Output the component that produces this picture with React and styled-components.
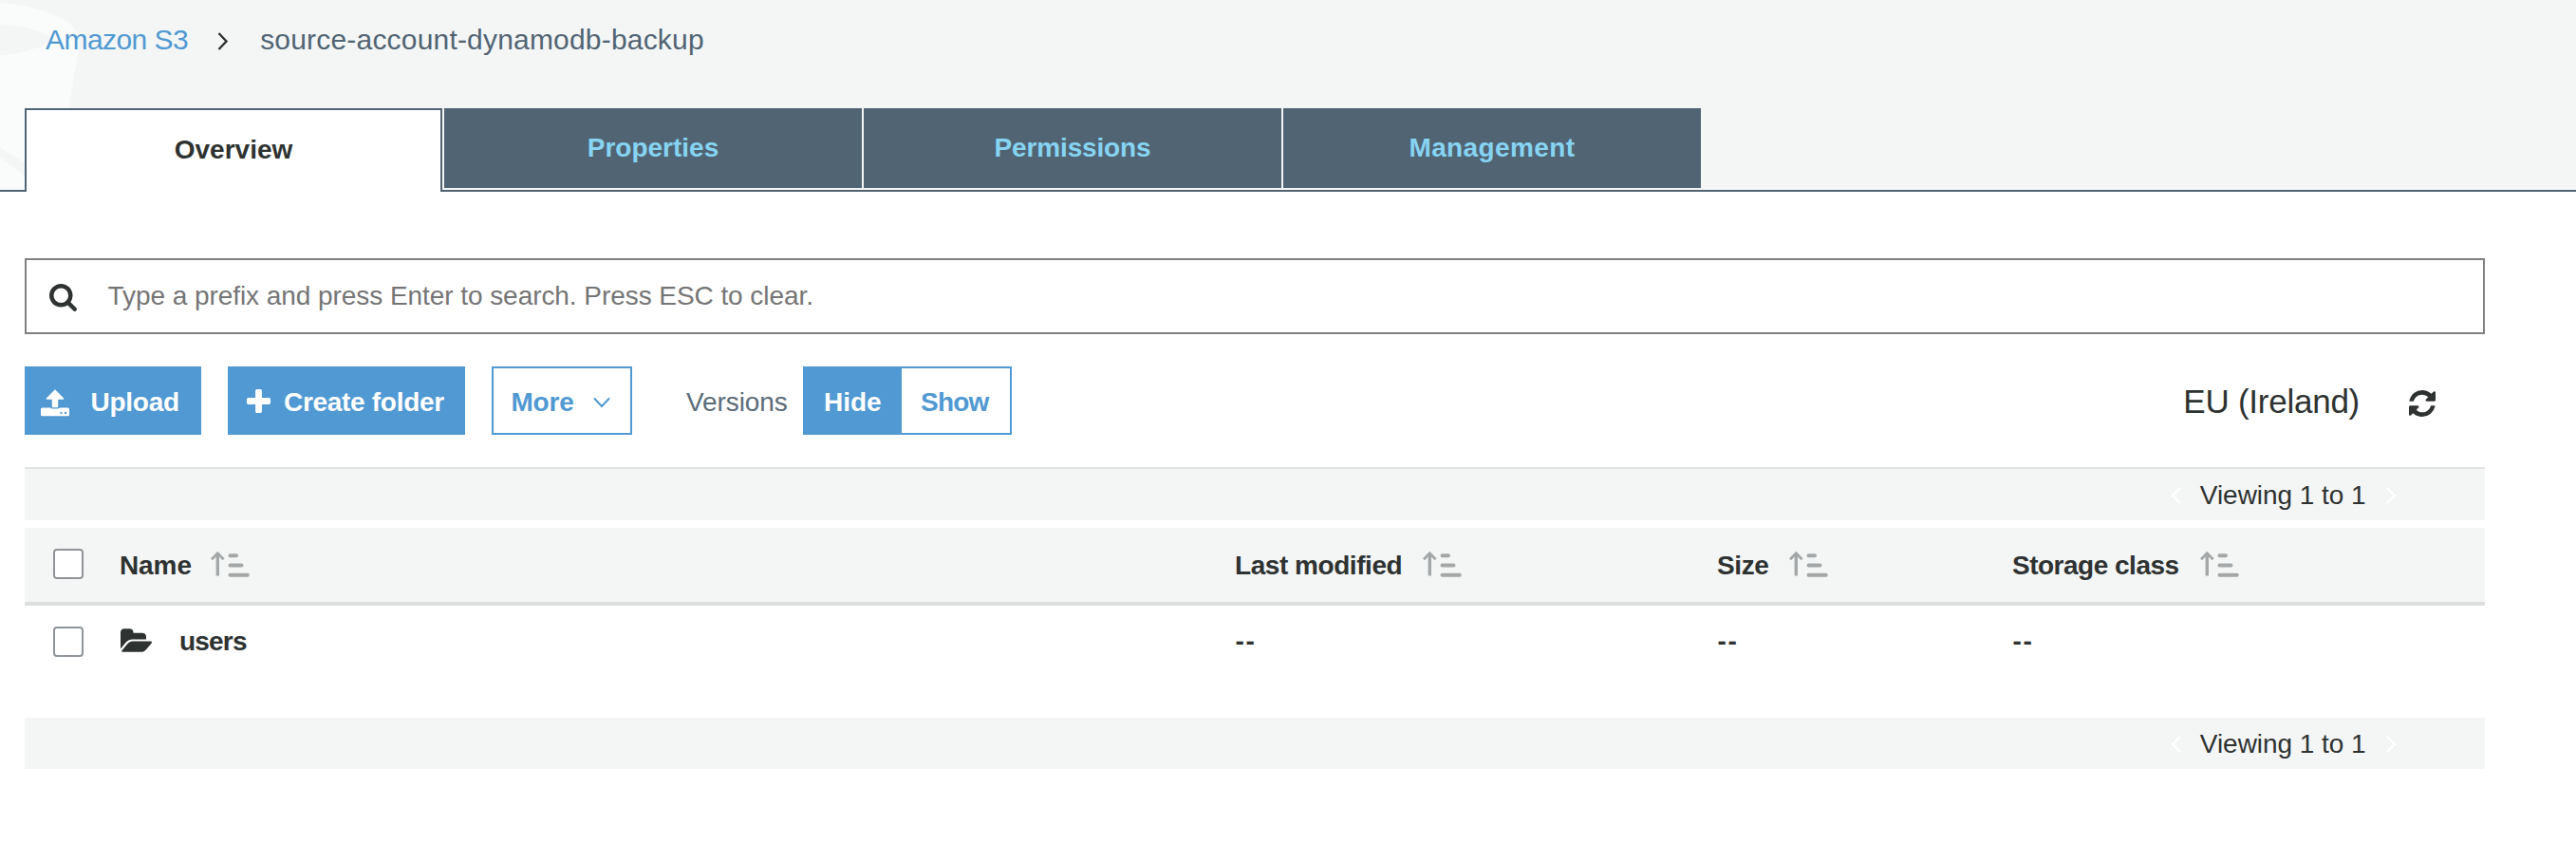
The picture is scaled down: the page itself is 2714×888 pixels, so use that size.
import React from "react";
import styled, { createGlobalStyle, css } from "styled-components";

const color = {
  ink: "#2e3231",
  slate: "#516473",
  blue: "#5099d2",
  sky: "#86d4f2",
  panel: "#f4f6f6",
  muted: "#a3a7a7",
};

const GlobalStyle = createGlobalStyle`
  * { box-sizing: border-box; }
  body {
    margin: 0;
    background: #fff;
    color: ${color.ink};
    font: 28px "Liberation Sans", Arial, sans-serif;
  }
`;

const Page = styled.div`
  min-height: 888px;
  width: 100%;
`;

/* Header */

const Header = styled.header`
  position: relative;
  height: 202px;
  display: flex;
  flex-direction: column;
  justify-content: space-between;
  background: linear-gradient(${color.panel}, ${color.panel}) top / 100% 200px no-repeat;
`;

const BucketArt = styled.svg`
  position: absolute;
  top: 0;
  left: 0;
`;

const Breadcrumb = styled.nav`
  position: relative;
  display: flex;
  align-items: center;
  height: 84px;
  padding-left: 48px;
  font-size: 30px;
`;

const CrumbLink = styled.a`
  color: ${color.blue};
  letter-spacing: -0.55px;
`;

const Crumb = styled.span`
  color: ${color.slate};
  letter-spacing: 0.19px;
`;

const CrumbChevron = styled.svg`
  margin: 3px 33px 0 31px;
`;

const TabStrip = styled.div`
  position: relative;
  display: flex;
  height: 88px;
`;

const TabLead = styled.div`
  width: 26px;
  border-bottom: 2px solid ${color.slate};
`;

const TabRest = styled.div`
  flex: 1;
  display: flex;
  align-items: flex-start;
  gap: 2px;
  padding-left: 2px;
  border-bottom: 2px solid ${color.slate};
`;

const Tab = styled.button`
  display: flex;
  align-items: center;
  justify-content: center;
  width: 440px;
  height: 84px;
  padding: 0;
  border: 0;
  background: ${color.slate};
  color: ${color.sky};
  font: inherit;
  font-weight: bold;
  letter-spacing: ${(p) => p.$spacing || 0}px;
  ${(p) =>
    p.$active &&
    css`
      height: 88px;
      border: 2px solid ${color.slate};
      border-bottom: 0;
      padding-bottom: 2px;
      background: #fff;
      color: ${color.ink};
    `}
`;

/* Search and actions */

const Content = styled.main`
  width: 2592px;
  margin: 70px 0 0 26px;
`;

const SearchBox = styled.div`
  display: flex;
  align-items: center;
  gap: 32.5px;
  height: 80px;
  padding-left: 24px;
  border: 2px solid #808080;
  color: #757575;
  letter-spacing: -0.06px;

  svg {
    margin-top: 2px;
  }
`;

const Toolbar = styled.div`
  display: flex;
  align-items: center;
  height: 72px;
  margin-top: 34px;
`;

const Button = styled.button`
  display: flex;
  align-items: center;
  width: ${(p) => p.$width}px;
  height: 72px;
  margin-right: ${(p) => p.$after || 0}px;
  padding: 4px 0 0 ${(p) => p.$pad - 2}px;
  gap: ${(p) => p.$gap || 0}px;
  border: 2px solid ${color.blue};
  background: ${(p) => (p.$primary ? color.blue : "#fff")};
  color: ${(p) => (p.$primary ? "#fff" : color.blue)};
  font: inherit;
  font-weight: bold;
  letter-spacing: ${(p) => p.$spacing || 0}px;
  white-space: nowrap;

  svg {
    flex: none;
    margin-bottom: ${(p) => p.$lift || 0}px;
  }
`;

const VersionsLabel = styled.span`
  width: 123px;
  padding-top: 4px;
  color: #5a6c79;
  letter-spacing: -0.1px;
`;

const Region = styled.div`
  display: flex;
  align-items: center;
  gap: 52px;
  margin-left: auto;
  padding: 2px 52px 0 0;
  font-size: 35px;
  letter-spacing: -0.25px;

  svg {
    margin-top: 4px;
  }
`;

/* Listing */

const Pager = styled.div`
  display: flex;
  align-items: center;
  justify-content: flex-end;
  height: ${(p) => (p.$ruled ? 56 : 54)}px;
  margin-top: ${(p) => p.$before}px;
  padding: 2px 93px 0 0;
  border-top: ${(p) => (p.$ruled ? "2px solid #e2e3e3" : "0")};
  background: ${color.panel};
  letter-spacing: -0.05px;
`;

const PagerText = styled.span`
  margin: 0 21.5px 0 19.5px;
`;

const Row = styled.div`
  display: grid;
  grid-template-columns: 100px 1175px 508px 311px 1fr;
  align-items: center;
  height: 76px;
  font-weight: bold;
`;

const HeadRow = styled(Row)`
  height: 82px;
  margin-top: 8px;
  border-bottom: 4px solid #dcdddd;
  background: ${color.panel};
`;

const Checkbox = styled.span`
  width: 32px;
  height: 32px;
  margin: 0 0 ${(p) => p.$lift || 0}px 30px;
  border: 2px solid #8f9498;
  border-radius: 4px;
  background: #fff;
`;

const ColumnTitle = styled.div`
  display: flex;
  align-items: center;
  gap: ${(p) => p.$gap || 22}px;
  padding-top: 2px;
  letter-spacing: ${(p) => p.$spacing}px;

  svg {
    margin-bottom: 4px;
  }
`;

const Entry = styled.div`
  display: flex;
  align-items: center;
  gap: 29px;
  padding-left: 1px;
  letter-spacing: -0.8px;

  svg {
    margin-bottom: 3px;
  }
`;

const Empty = styled.span`
  padding-left: 0.5px;
  letter-spacing: 1.6px;
`;

/* Icons */

const SearchIcon = () => (
  <svg width="29" height="29" viewBox="64 128 1664 1664" fill={color.ink}>
    <path d="M1216 832q0-185-131.5-316.5t-316.5-131.5-316.5 131.5-131.5 316.5 131.5 316.5 316.5 131.5 316.5-131.5 131.5-316.5zm512 832q0 52-38 90t-90 38q-54 0-90-38l-343-342q-179 124-399 124-143 0-273.5-55.5t-225-150-150-225-55.5-273.5 55.5-273.5 150-225 225-150 273.5-55.5 273.5 55.5 225 150 150 225 55.5 273.5q0 220-124 399l343 343q37 37 37 90z" />
  </svg>
);

const UploadIcon = () => (
  <svg width="30" height="29" viewBox="0 0 30 29" fill="#fff">
    <path d="M15 .3 24.200 9.600Q24.800 10.600 23.600 10.800H18.200V18.300Q18.200 19.200 17.300 19.200H12.700Q11.800 19.200 11.800 18.300V10.800H6.400Q5.200 10.600 5.800 9.600Z" />
    <path
      fillRule="evenodd"
      d="M1.500 19.400H10.200Q10.800 20.500 12.200 20.500H17.800Q19.200 20.500 19.800 19.400H28.500Q30 19.400 30 20.900V26.700Q30 28.200 28.500 28.200H1.500Q0 28.200 0 26.700V20.900Q0 19.400 1.500 19.400ZM20.500 24V26H22.500V24ZM25 24V26H27V24Z"
    />
  </svg>
);

const PlusIcon = () => (
  <svg width="25" height="25" viewBox="192 128 1408 1408" fill="#fff">
    <path d="M1600 736v192q0 40-28 68t-68 28h-416v416q0 40-28 68t-68 28h-192q-40 0-68-28t-28-68v-416h-416q-40 0-68-28t-28-68v-192q0-40 28-68t68-28h416v-416q0-40 28-68t68-28h192q40 0 68 28t28 68v416h416q40 0 68 28t28 68z" />
  </svg>
);

const RefreshIcon = () => (
  <svg width="28" height="28" viewBox="128 128 1536 1536" fill={color.ink}>
    <path d="M1639 1056q0 5-1 7-64 268-268 434.5t-478 166.5q-146 0-282.5-55t-243.5-157l-129 129q-19 19-45 19t-45-19-19-45v-448q0-26 19-45t45-19h448q26 0 45 19t19 45-19 45l-137 137q71 66 161 102t187 36q134 0 250-65t186-179q11-17 53-117 8-23 30-23h192q13 0 22.5 9.5t9.5 22.5zm25-800v448q0 26-19 45t-45 19h-448q-26 0-45-19t-19-45 19-45l138-138q-148-137-349-137-134 0-250 65t-186 179q-11 17-53 117-8 23-30 23h-199q-13 0-22.5-9.5t-9.5-22.5v-7q65-268 270-434.5t480-166.5q146 0 284 55.5t245 156.5l130-129q19-19 45-19t45 19 19 45z" />
  </svg>
);

const FolderIcon = () => (
  <svg width="33" height="25" viewBox="0 128 1879 1408" fill={color.ink}>
    <path d="M1879 952q0 31-31 66l-336 396q-43 51-120.5 86.5t-143.5 35.5h-1088q-34 0-60.5-13t-26.5-43q0-31 31-66l336-396q43-51 120.5-86.5t143.5-35.5h1088q34 0 60.5 13t26.5 43zm-343-344v160h-832q-94 0-197 47.5t-164 119.5l-337 396-5 6q0-4-.5-12.5t-.5-12.5v-960q0-92 66-158t158-66h320q92 0 158 66t66 158v32h544q92 0 158 66t66 158z" />
  </svg>
);

const DownIcon = () => (
  <svg width="18" height="12" viewBox="0 0 18 12" fill="none" stroke={color.blue} strokeWidth="2" strokeLinecap="round">
    <path d="M1.5 2 9 10 16.5 2" />
  </svg>
);

const PagerArrow = ({ d }) => (
  <svg width="11" height="18" viewBox="0 0 11 18" fill="none" stroke="#fff" strokeWidth="2.2">
    <path d={d} />
  </svg>
);

const SortIcon = () => (
  <svg width="42" height="28" viewBox="0 0 42 28" fill="none" stroke={color.muted} strokeLinecap="round">
    <path strokeWidth="3.4" strokeLinecap="butt" d="M7.3 26.5V3.5" />
    <path strokeWidth="2.8" strokeLinecap="butt" d="M1 9.2 7.3 2.8 13.6 9.2" />
    <path strokeWidth="4" d="M20.5 5.2H27M20.5 15.6H32.5M20.5 25.8H38.8" />
  </svg>
);

const tabs = [
  { label: "Properties" },
  { label: "Permissions", spacing: -0.15 },
  { label: "Management", spacing: 0.4 },
];

const columns = [
  { label: "Name", spacing: -0.1, gap: 20.5 },
  { label: "Last modified", spacing: -0.45 },
  { label: "Size", spacing: -0.4 },
  { label: "Storage class", spacing: -0.5 },
];

const Paging = (props) => (
  <Pager {...props}>
    <PagerArrow d="M10 1 2 9l8 8" />
    <PagerText>Viewing 1 to 1</PagerText>
    <PagerArrow d="M1 1l8 8-8 8" />
  </Pager>
);

export default function App() {
  return (
    <Page>
      <GlobalStyle />
      <Header>
        <BucketArt width="90" height="200" viewBox="0 0 90 200">
          <path fill="#fafcfb" d="M0 3C26 5 44 10 58 16 74 23 83 31 82.500 42L82 57 72 114 58 200H0Z" />
          <path fill={color.panel} d="M0 26C20 27 52 33 52 40.500 52 49 22 57 0 58Z" />
          <path fill={color.panel} d="M0 155 40 181V196L0 166Z" />
        </BucketArt>
        <Breadcrumb>
          <CrumbLink>Amazon S3</CrumbLink>
          <CrumbChevron width="12" height="19" viewBox="0 0 12 19" fill="none" stroke={color.ink} strokeWidth="2.4">
            <path d="M1.500 1 9.500 9.500 1.500 18" />
          </CrumbChevron>
          <Crumb>source-account-dynamodb-backup</Crumb>
        </Breadcrumb>
        <TabStrip>
          <TabLead />
          <Tab $active>Overview</Tab>
          <TabRest>
            {tabs.map((t) => (
              <Tab key={t.label} $spacing={t.spacing}>{t.label}</Tab>
            ))}
          </TabRest>
        </TabStrip>
      </Header>
      <Content>
        <SearchBox>
          <SearchIcon />
          <span>Type a prefix and press Enter to search. Press ESC to clear.</span>
        </SearchBox>
        <Toolbar>
          <Button $primary $width={186} $pad={17} $gap={22.5} $after={28} $spacing={-0.25}>
            <UploadIcon />
            Upload
          </Button>
          <Button $primary $width={250} $pad={20} $gap={14} $after={28} $spacing={-0.3} $lift={3}>
            <PlusIcon />
            Create folder
          </Button>
          <Button $width={148} $pad={20.5} $gap={20} $after={57} $spacing={-0.2}>
            More
            <DownIcon />
          </Button>
          <VersionsLabel>Versions</VersionsLabel>
          <Button $primary $width={102} $pad={22}>Hide</Button>
          <Button $width={118} $pad={22} $spacing={-0.8}>Show</Button>
          <Region>
            EU (Ireland)
            <RefreshIcon />
          </Region>
        </Toolbar>
        <Paging $ruled $before={34} />
        <HeadRow>
          <Checkbox $lift={2} />
          {columns.map((c) => (
            <ColumnTitle key={c.label} $spacing={c.spacing} $gap={c.gap}>
              {c.label}
              <SortIcon />
            </ColumnTitle>
          ))}
        </HeadRow>
        <Row>
          <Checkbox />
          <Entry>
            <FolderIcon />
            users
          </Entry>
          <Empty>--</Empty>
          <Empty>--</Empty>
          <Empty>--</Empty>
        </Row>
        <Paging $before={42} />
      </Content>
    </Page>
  );
}
